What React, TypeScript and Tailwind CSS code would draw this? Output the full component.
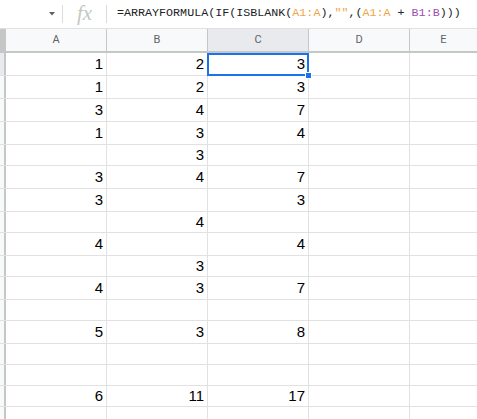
import React from "react";

type Row = { h: number; a?: string; b?: string; c?: string };

const rows: Row[] = [
  { h: 23, a: "1", b: "2", c: "3" },
  { h: 23, a: "1", b: "2", c: "3" },
  { h: 23, a: "3", b: "4", c: "7" },
  { h: 23, a: "1", b: "3", c: "4" },
  { h: 21, b: "3" },
  { h: 23, a: "3", b: "4", c: "7" },
  { h: 23, a: "3", c: "3" },
  { h: 21, b: "4" },
  { h: 23, a: "4", c: "4" },
  { h: 21, b: "3" },
  { h: 23, a: "4", b: "3", c: "7" },
  { h: 21 },
  { h: 23, a: "5", b: "3", c: "8" },
  { h: 21 },
  { h: 21 },
  { h: 21, a: "6", b: "11", c: "17" },
  { h: 21 },
];

const cellCls =
  "w-[101px] shrink-0 border-r border-[#e1e1e1] flex items-center justify-end pr-[3px] text-[15px] text-[#000]";

function Cell({ v }: { v?: string }) {
  return <div className={cellCls}>{v}</div>;
}

export default function App() {
  return (
    <div className="w-[477px] h-[419px] overflow-hidden bg-white font-['Liberation_Sans',Arial,sans-serif]">
      {/* formula bar */}
      <div className="h-[29px] flex items-center border-b border-[#e1e1e1]">
        <div className="w-[62px] shrink-0 flex justify-end pr-[7px]">
          <svg width="6" height="4" viewBox="0 0 6 4">
            <path d="M0 0 L6 0 L3 3.5 Z" fill="#5f6368" />
          </svg>
        </div>
        <div className="w-px h-[18px] bg-[#dadce0]" />
        <div className="w-[43px] shrink-0 flex justify-center">
          <span className="font-['Liberation_Serif',serif] italic text-[21px] leading-none text-[#c4c7c5] -mt-[2px]">
            fx
          </span>
        </div>
        <div className="w-px h-[18px] bg-[#dadce0]" />
        <div className="pl-[10px] font-['Liberation_Mono',monospace] text-[11.7px] text-[#202124] whitespace-nowrap">
          =ARRAYFORMULA(IF(ISBLANK(<span className="text-[#f4a543]">A1:A</span>),
          <span className="text-[#f4a543]">""</span>,(
          <span className="text-[#f4a543]">A1:A</span> +{" "}
          <span className="text-[#9d4fb3]">B1:B</span>)))
        </div>
      </div>

      {/* column headers */}
      <div className="h-[24px] flex border-b-2 border-[#c4c7c5] bg-[#f8f9fa] text-[11px] text-[#5f6368] font-['Roboto',sans-serif]">
        <div className="w-[6px] shrink-0 border-r-2 border-[#c4c7c5] bg-[#c4c7c5]" />
        {["A", "B", "C", "D"].map((l) => (
          <div
            key={l}
            className={
              "w-[101px] shrink-0 border-r border-[#c4c7c5] flex items-center justify-center " +
              (l === "C" ? "bg-[#e8eaed]" : "")
            }
          >
            {l}
          </div>
        ))}
        <div className="flex-1 flex items-center justify-center">E</div>
      </div>

      {/* grid */}
      <div className="relative">
        {rows.map((r, i) => (
          <div
            key={i}
            className="flex border-b border-[#e1e1e1]"
            style={{ height: r.h }}
          >
            <div
              className={
                "w-[6px] shrink-0 border-r-2 border-[#c4c7c5] " +
                (i === 0 ? "bg-[#e8eaed]" : "bg-[#f8f9fa]")
              }
            />
            <Cell v={r.a} />
            <Cell v={r.b} />
            <Cell v={r.c} />
            <Cell />
            <div className="flex-1" />
          </div>
        ))}

        {/* selection */}
        <div className="absolute left-[207px] top-0 w-[102px] h-[23px] border-2 border-[#1a73e8] pointer-events-none" />
        <div className="absolute left-[305px] top-[19px] w-[7px] h-[7px] bg-[#1a73e8] border border-white" />
      </div>
    </div>
  );
}
